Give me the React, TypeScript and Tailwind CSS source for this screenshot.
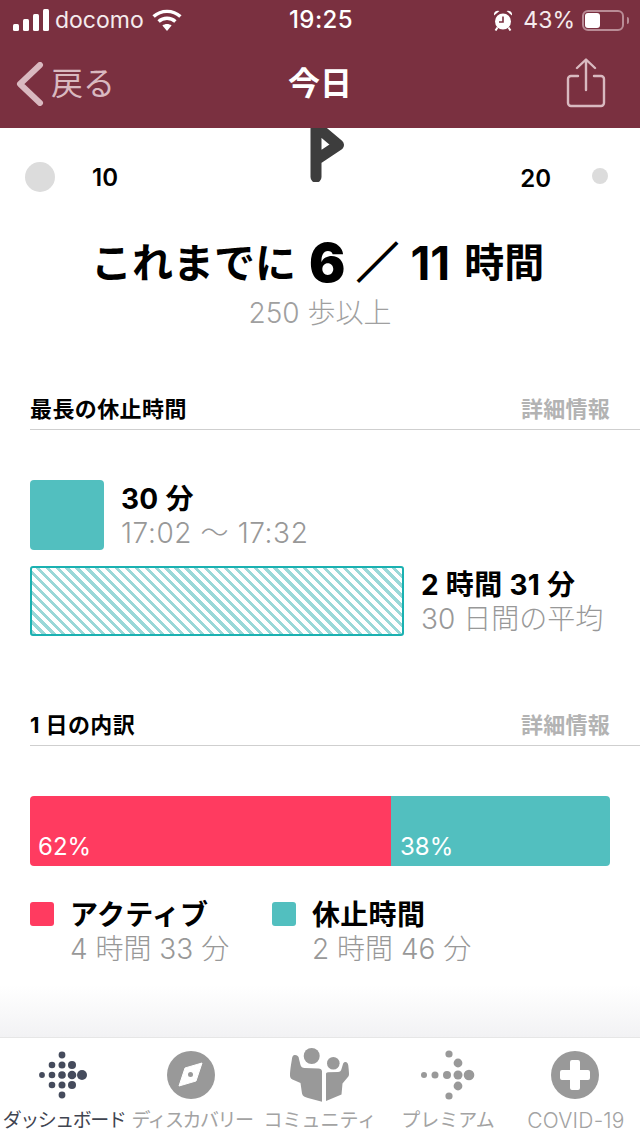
import React from "react";

const FONT = "font-['Inter','Noto_Sans_CJK_JP',sans-serif]";

function Signal() {
  return (
    <svg width="36" height="22" viewBox="0 0 36 22" className="shrink-0">
      <rect x="0" y="15" width="6" height="7" rx="1.5" fill="#fff" />
      <rect x="10" y="10" width="6" height="12" rx="1.5" fill="#fff" />
      <rect x="20" y="5" width="6" height="17" rx="1.5" fill="#fff" />
      <rect x="30" y="0" width="6" height="22" rx="1.5" fill="#fff" />
    </svg>
  );
}

function Wifi() {
  return (
    <svg width="30" height="22" viewBox="0 0 30 22" className="shrink-0" fill="none" stroke="#fff" strokeWidth="3.4">
      <path d="M1.6 7.6C9 .6 21 .6 28.4 7.6" />
      <path d="M6.6 12.6C11.4 8.2 18.6 8.2 23.4 12.6" />
      <path d="M15 22l-4.6-5.4c2.6-2 6.6-2 9.2 0z" fill="#fff" stroke="none" />
    </svg>
  );
}

function Alarm() {
  return (
    <svg width="18" height="21" viewBox="0 0 18 21" className="shrink-0">
      <circle cx="9" cy="11.5" r="8" fill="#fff" />
      <path d="M0 5.5a4 4 0 0 1 5.5-4.5zM18 5.500a4 4 0 0 0-5.500-4.500z" fill="#fff" />
      <path d="M9 6.500v5.500H5" stroke="#7a3040" strokeWidth="1.6" fill="none" />
      <path d="M3.500 17.500l-2 3M14.500 17.500l2 3" stroke="#fff" strokeWidth="2" />
    </svg>
  );
}

function Gauge() {
  return (
    <svg width="36" height="54" viewBox="0 0 36 54" className="block">
      <path
        d="M6 -6V49M6 -2L28.500 17 6 32"
        fill="none"
        stroke="#3d3d3d"
        strokeWidth="11"
        strokeLinecap="round"
        strokeLinejoin="round"
      />
    </svg>
  );
}

function Share() {
  return (
    <svg width="40" height="50" viewBox="0 0 40 50" fill="none" stroke="#d9b9c0" strokeWidth="2.4" strokeLinecap="round" strokeLinejoin="round">
      <path d="M12 18H5a3 3 0 0 0-3 3v24a3 3 0 0 0 3 3h30a3 3 0 0 0 3-3V21a3 3 0 0 0-3-3h-7" />
      <path d="M20 32V2M11 10l9-8.500L29 10" />
    </svg>
  );
}

function DashboardDots() {
  const dots: [number, number, number][] = [
    [23, 5, 3.4],
    [13, 15, 3.3],
    [23, 15, 3.5],
    [33, 15, 4],
    [3, 25, 2.9],
    [13, 25, 3.3],
    [23, 25, 3.8],
    [33, 25, 4.3],
    [43, 25, 5],
    [13, 35, 3.3],
    [23, 35, 3.5],
    [33, 35, 4],
    [23, 45, 3.4],
  ];
  return (
    <svg width="48" height="50" viewBox="0 0 48 50" className="-translate-x-[1px]">
      {dots.map(([x, y, r], i) => (
        <circle key={i} cx={x} cy={y} r={r} fill="#454b5c" />
      ))}
    </svg>
  );
}

function PremiumDots() {
  const dots: [number, number, number][] = [
    [28, 4, 3.6],
    [37, 13, 4.4],
    [3, 25, 3],
    [14, 25, 3.5],
    [26, 25, 4],
    [37, 25, 4.5],
    [48, 25, 5.3],
    [37, 36, 4.4],
    [28, 46, 3.6],
  ];
  return (
    <svg width="54" height="50" viewBox="0 0 54 50">
      {dots.map(([x, y, r], i) => (
        <circle key={i} cx={x} cy={y} r={r} fill="#999" />
      ))}
    </svg>
  );
}

function Compass() {
  return (
    <svg width="48" height="48" viewBox="0 0 48 48" className="-translate-x-[1px]">
      <circle cx="24" cy="24" r="24" fill="#999" />
      <path d="M35 12L29 30 12 35 18 17z" fill="#fff" strokeLinejoin="round" stroke="#fff" strokeWidth="1" />
      <circle cx="23.5" cy="23.5" r="2.5" fill="#999" />
    </svg>
  );
}

function Community() {
  return (
    <svg width="60" height="54" viewBox="20 8 60 54" fill="#999">
      <circle cx="41.7" cy="16" r="8" />
      <circle cx="63.3" cy="23.3" r="6.3" />
      <path d="M25 15c2 0 4 1.500 4 4l1.500 6c.5 2 2 3 4 3l14 .5c2 0 3.500 1 3.500 3V61.700L38 58c-3-.8-5.500-2-6-4.500L30.500 43l-8-3.500c-2-1-2.500-2.500-2.500-4 0-6 1.500-13 2-17 .3-2 1.300-3.500 2.500-3.500z" />
      <path d="M56 61V34c0-1 .8-1.700 2-1.700L68 32c2 0 3-1 3.500-3l1.500-5c.5-1.500 1.500-2 2.500-2 1.500 0 2.500 1.500 2.800 3.500.3 3 .7 6 .7 8.500 0 1.500-.5 2.500-1.500 3.500L72.500 43.500l-1 11-15.500 6.500z" />
    </svg>
  );
}

function Plus() {
  return (
    <svg width="48" height="48" viewBox="0 0 48 48" className="-translate-x-[1px]">
      <circle cx="24" cy="24" r="24" fill="#999" />
      <path
        d="M21 9h6a2 2 0 0 1 2 2v8h8a2 2 0 0 1 2 2v6a2 2 0 0 1-2 2h-8v8a2 2 0 0 1-2 2h-6a2 2 0 0 1-2-2v-8h-8a2 2 0 0 1-2-2v-6a2 2 0 0 1 2-2h8v-8a2 2 0 0 1 2-2z"
        fill="#fff"
      />
    </svg>
  );
}

function SectionHeader({ title }: { title: string }) {
  return (
    <div className="ml-[30px] flex h-[40px] items-center justify-between border-b border-[#cfcfcf] pr-[30px] pb-[2px]">
      <span className="text-[22px] leading-none font-bold tracking-[0.4px] text-black">{title}</span>
      <span className="text-[22px] leading-none font-bold tracking-[0.25px] text-[#b3b3b3]">詳細情報</span>
    </div>
  );
}

function Stat({ title, sub, className, subClass }: { title: string; sub: string; className?: string; subClass?: string }) {
  return (
    <div className={className}>
      <div className="h-[36px] text-[28px] leading-[38px] font-bold tracking-[0.3px] text-black">{title}</div>
      <div className={`h-[34px] text-[28px] leading-[34px] font-light text-[#989898] ${subClass ?? ""}`}>{sub}</div>
    </div>
  );
}

function Tab({ label, active, labelClass, children }: { label: string; active?: boolean; labelClass: string; children: React.ReactNode }) {
  return (
    <div className="flex flex-col items-center">
      <div className="flex h-[56px] items-center justify-center">{children}</div>
      <div className={`mt-[5px] leading-[26px] whitespace-nowrap ${labelClass} ${active ? "text-[#3f4450]" : "text-[#a3a3a3]"}`}>
        {label}
      </div>
    </div>
  );
}

export default function App() {
  return (
    <div className={`${FONT} flex h-[1136px] w-[640px] flex-col overflow-hidden bg-white`}>
      <header className="h-[128px] shrink-0 bg-[#7a3040] text-white">
        <div className="flex h-[40px] items-center justify-between pr-[11px] pl-[13px]">
          <div className="flex w-[200px] items-center gap-[6px]">
            <Signal />
            <span className="text-[23px] leading-none text-[#f5ebed]">docomo</span>
            <span className="ml-[2px]"><Wifi /></span>
          </div>
          <span className="text-[24px] leading-none font-medium tracking-[0.4px]">19:25</span>
          <div className="flex w-[200px] items-center justify-end">
            <Alarm />
            <span className="ml-[11px] text-[23px] leading-none text-[#f5ebed]">43%</span>
            <div className="ml-[7px] flex items-center">
              <div className="flex h-[21px] w-[42px] items-center rounded-[6px] border-2 border-[#b98c96] p-[1px]">
                <div className="h-full w-[15px] rounded-[3px] bg-white" />
              </div>
              <div className="ml-[3px] h-[7px] w-[2px] rounded-r bg-[#b98c96]" />
            </div>
          </div>
        </div>
        <div className="flex h-[88px] items-center justify-between px-[16px]">
          <div className="flex w-[180px] items-center gap-[7px]">
            <svg width="28" height="44" viewBox="0 0 28 44" fill="none" stroke="#d9b9c0" strokeWidth="6" strokeLinecap="round" strokeLinejoin="round">
              <path d="M24 3L4 22l20 19" />
            </svg>
            <span className="text-[32px] leading-none text-[#d9b9c0]">戻る</span>
          </div>
          <span className="text-[32px] leading-none font-bold">今日</span>
          <div className="flex w-[180px] justify-end pr-[18px] pb-[2px]">
            <Share />
          </div>
        </div>
      </header>

      <main className="flex min-h-0 flex-1 flex-col">
        <div className="flex h-[54px] items-end justify-between pr-[32px] pl-[25px]">
          <div className="flex items-center">
            <div className="mb-[-10px] h-[30px] w-[30px] rounded-full bg-[#dcdcdc]" />
            <span className="mb-[-11px] ml-[37px] text-[24px] leading-none font-semibold text-black">10</span>
          </div>
          <div className="ml-[192px]"><Gauge /></div>
          <div className="ml-auto flex items-center">
            <span className="mb-[-9px] text-[24px] leading-none font-semibold text-black">20</span>
            <div className="mb-[-2px] ml-[41px] h-[16px] w-[16px] rounded-full bg-[#dcdcdc]" />
          </div>
        </div>

        <div className="mt-[51px] flex h-[60px] items-center pl-[91px] text-[41px] leading-none font-bold text-black">
          <span>これまでに</span>
          <span className="ml-[13px] text-[54px] leading-none font-black">6</span>
          <span className="ml-[11px] text-[42px] [-webkit-text-stroke:1.5px_black]">／</span>
          <span className="ml-[12px] text-[46px]">11</span>
          <span className="ml-[14px] text-[40px]">時間</span>
        </div>
        <div className="mt-[3px] text-center text-[28px] leading-[34px] font-light text-[#a0a0a0]">250 歩以上</div>

        <div className="mt-[60px]"><SectionHeader title="最長の休止時間" /></div>

        <div className="mt-[50px] flex items-center px-[30px]">
          <div className="h-[70px] w-[74px] rounded-[4px] bg-[#52bfbf]" />
          <Stat title="30 分" sub="17:02 〜 17:32" className="ml-[17px]" subClass="tracking-[0.6px]" />
        </div>
        <div className="mt-[16px] flex items-center px-[30px]">
          <div className="h-[70px] w-[374px] rounded-[3px] border-2 border-[#1bb1b1] bg-[repeating-linear-gradient(45deg,#9ad8d8_0,#9ad8d8_3px,#ffffff_3px,#ffffff_7px)]" />
          <Stat title="2 時間 31 分" sub="30 日間の平均" className="ml-[17px]" />
        </div>

        <div className="mt-[70px]"><SectionHeader title="1 日の内訳" /></div>

        <div className="mt-[50px] ml-[30px] flex h-[70px] w-[580px] overflow-hidden rounded-[4px] text-[24px] leading-none text-white">
          <div className="flex w-[361px] items-end bg-[#ff3b60] pb-[7px] pl-[8px]">62%</div>
          <div className="flex flex-1 items-end bg-[#52bfbf] pb-[7px] pl-[9px]">38%</div>
        </div>

        <div className="mt-[30px] flex px-[30px]">
          <div className="flex w-[242px] items-start">
            <div className="mt-[6px] h-[24px] w-[24px] rounded-[3px] bg-[#ff3b60]" />
            <Stat title="アクティブ" sub="4 時間 33 分" className="ml-[16px]" />
          </div>
          <div className="flex items-start">
            <div className="mt-[6px] h-[24px] w-[24px] rounded-[3px] bg-[#52bfbf]" />
            <Stat title="休止時間" sub="2 時間 46 分" className="ml-[16px]" />
          </div>
        </div>

        <div className="mt-auto h-[52px] bg-gradient-to-b from-white to-[#f2f2f4]" />
      </main>

      <nav className="grid h-[99px] shrink-0 grid-cols-5 border-t border-[#e6e6e6] bg-white pt-[9px]">
        <Tab label="ダッシュボード" active labelClass="text-[19px] tracking-[-1.5px]"><DashboardDots /></Tab>
        <Tab label="ディスカバリー" labelClass="text-[19px] tracking-[-1.5px]"><Compass /></Tab>
        <Tab label="コミュニティ" labelClass="text-[19px]"><Community /></Tab>
        <Tab label="プレミアム" labelClass="text-[19px]"><PremiumDots /></Tab>
        <Tab label="COVID-19" labelClass="text-[21px] font-light tracking-[0.2px]"><Plus /></Tab>
      </nav>
    </div>
  );
}
